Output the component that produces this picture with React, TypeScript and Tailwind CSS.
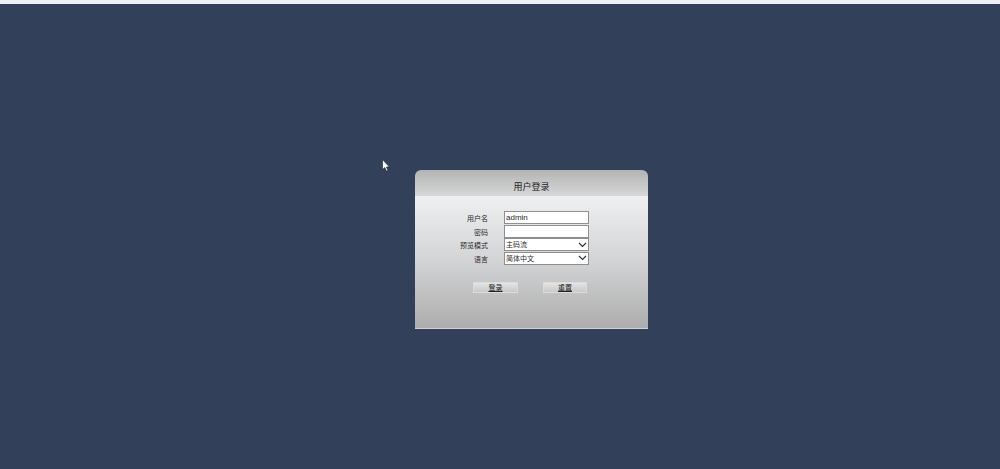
const font = "font-['Liberation_Sans','Noto_Sans_CJK_SC',sans-serif]";

const rows = [
  { label: "用户名", kind: "input", value: "admin" },
  { label: "密码", kind: "input", value: "" },
  { label: "预览模式", kind: "select", value: "主码流" },
  { label: "语言", kind: "select", value: "简体中文" },
];

function Field({ kind, value }: { kind: string; value: string }) {
  return (
    <div className={`flex h-[13px] w-[85px] items-center justify-between border border-[#8f8f8f] bg-white pl-[1px] pr-[1px] leading-none text-[#2a2a2a] ${kind === "select" ? "text-[7px]" : "text-[8px]"}`}>
      <span>{value}</span>
      {kind === "select" && (
        <svg width="9" height="6" viewBox="0 0 9 6" fill="none" stroke="#333" strokeWidth="1.2">
          <path d="M1 1l3.5 3.5L8 1" />
        </svg>
      )}
    </div>
  );
}

function Button({ label, width }: { label: string; width: string }) {
  return (
    <div className={`flex h-[11px] items-center justify-center border border-[#dcdcdc] bg-gradient-to-b from-[#e4e4e4] to-[#c8c8c8] text-[7px] leading-none text-[#222] underline ${width}`}>
      {label}
    </div>
  );
}

export default function App() {
  return (
    <div className={`relative h-[469px] w-[1000px] overflow-hidden bg-[#334059] antialiased ${font}`}>
      <div className="h-[4px] bg-[#eef0f4]" />
      <div className="pl-[415px] pt-[166px]">
        <div className="h-[159px] w-[233px] overflow-hidden rounded-t-[6px] border-b border-[#d0d1d2]">
          <div className="flex h-[26px] items-center justify-center bg-gradient-to-b from-[#b4b4b4] to-[#d6d7d8] pt-[9px] pb-[1px] text-[9px] leading-none text-[#222]">
            用户登录
          </div>
          <div className="h-[132px] bg-gradient-to-b from-[#eff0f2] via-[#d2d3d5] to-[#adadad] pt-[15px]">
            <div className="flex flex-col">
              {rows.map((row) => (
                <div key={row.label} className="flex h-[13.5px] items-center">
                  <div className="w-[73px] pt-[2px] text-right text-[7px] leading-none text-[#2a2a2a]">{row.label}</div>
                  <div className="ml-[16px]">
                    <Field kind={row.kind} value={row.value} />
                  </div>
                </div>
              ))}
            </div>
            <div className="mt-[17px] flex gap-[25px] pl-[58px]">
              <Button label="登录" width="w-[45px]" />
              <Button label="重置" width="w-[44px]" />
            </div>
          </div>
        </div>
      </div>
      <svg className="absolute left-[382px] top-[159px]" width="8" height="13" viewBox="0 0 8 13">
        <path d="M0.5 0.5v10l2.3-2 1.6 3.6 1.6-.7-1.6-3.4h3z" fill="#fff" stroke="#1a2233" strokeWidth="0.6" />
      </svg>
    </div>
  );
}
